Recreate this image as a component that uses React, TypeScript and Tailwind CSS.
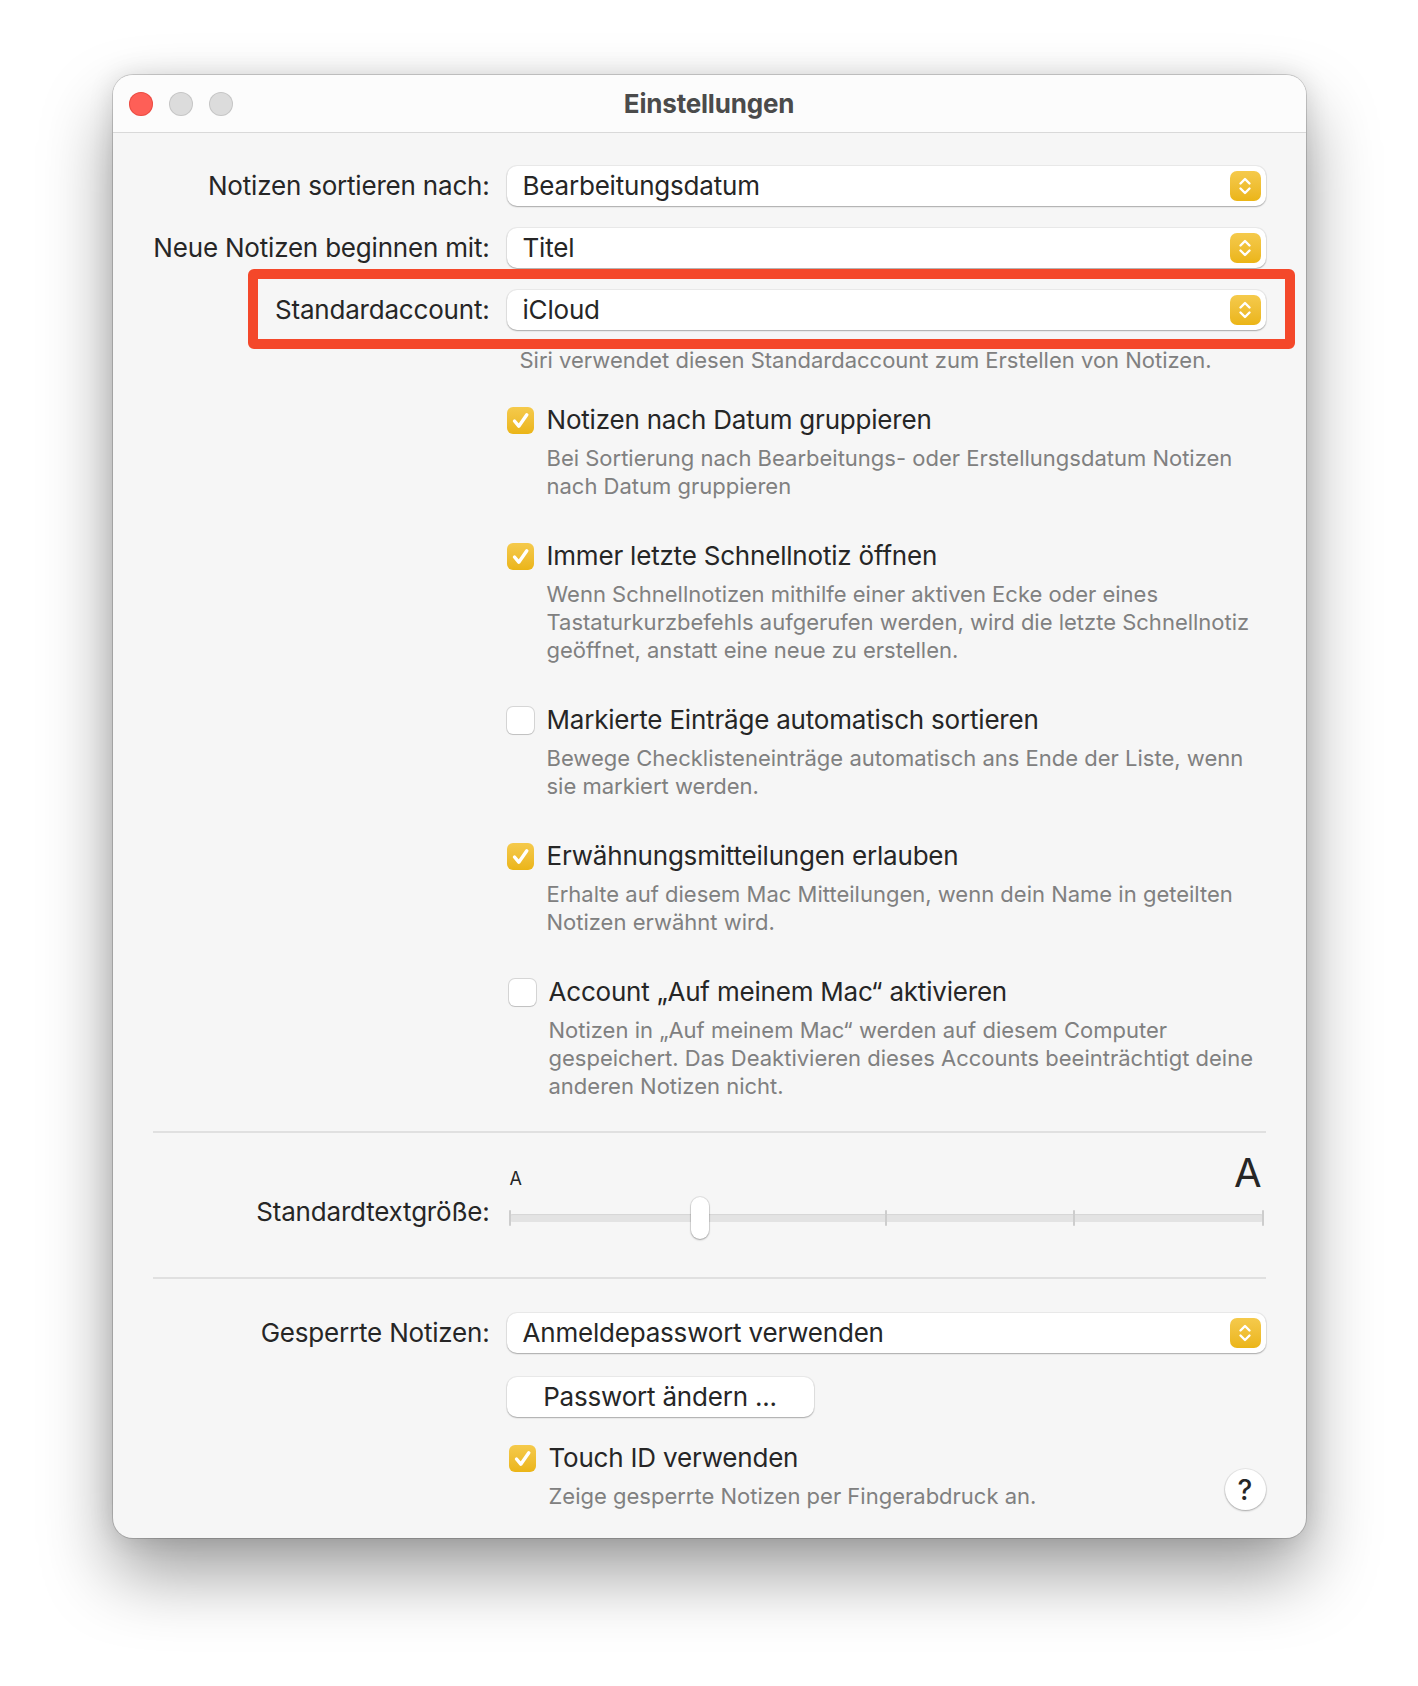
import { ReactNode } from "react";

const popupShadow =
  "shadow-[0_0_0_1px_rgba(0,0,0,0.05),0_1px_1.5px_rgba(0,0,0,0.28)]";

function Stepper() {
  return (
    <div className="w-[31px] h-[30px] rounded-[7px] bg-gradient-to-b from-[#f5ca4b] to-[#ebb515] flex items-center justify-center">
      <svg width="16" height="20" viewBox="0 0 16 20" fill="none">
        <path d="M3.5 7.5 L8 3 L12.5 7.5" stroke="white" strokeWidth="2.4" strokeLinecap="round" strokeLinejoin="round" />
        <path d="M3.5 12.5 L8 17 L12.5 12.5" stroke="white" strokeWidth="2.4" strokeLinecap="round" strokeLinejoin="round" />
      </svg>
    </div>
  );
}

function Popup({ value }: { value: string }) {
  return (
    <div className={`h-[40px] bg-white rounded-[10px] ${popupShadow} flex items-center justify-between pl-[16px] pr-[5px]`}>
      <span className="text-[26px] leading-[32px] tracking-[-0.2px] text-[#262626]">{value}</span>
      <Stepper />
    </div>
  );
}

function Checkbox({ checked }: { checked: boolean }) {
  if (checked) {
    return (
      <div className="w-[27px] h-[27px] rounded-[6px] bg-gradient-to-b from-[#f5ca4b] to-[#ebb515] flex items-center justify-center shrink-0">
        <svg width="27" height="27" viewBox="0 0 27 27" fill="none">
          <path d="M7.5 14 L11.8 19.2 L19.8 7.8" stroke="white" strokeWidth="3.4" strokeLinecap="round" strokeLinejoin="round" />
        </svg>
      </div>
    );
  }
  return (
    <div className="w-[27px] h-[27px] rounded-[6px] bg-white shrink-0 shadow-[0_0_0_1px_rgba(0,0,0,0.13),0_1px_1px_rgba(0,0,0,0.1)]" />
  );
}

function Option({ checked, title, lines, shift }: { checked: boolean; title: string; lines: string[]; shift?: boolean }) {
  return (
    <div className={shift ? "ml-[2px]" : ""}>
      <div className="flex items-center gap-[13px] h-[32px]">
        <Checkbox checked={checked} />
        <span className="text-[26px] leading-[32px] tracking-[-0.2px] text-[#262626] whitespace-nowrap">{title}</span>
      </div>
      <div className="pl-[40px] mt-[8px] text-[22px] leading-[28px] text-[#808080]">
        {lines.map((l) => (
          <div key={l} className="whitespace-nowrap">{l}</div>
        ))}
      </div>
    </div>
  );
}

function Row({ label, children, className = "" }: { label: string; children: ReactNode; className?: string }) {
  return (
    <div className={`grid grid-cols-[337px_1fr] gap-x-[17px] items-center relative ${className}`}>
      <div className="text-right text-[26px] leading-[32px] tracking-[-0.2px] text-[#262626] whitespace-nowrap">{label}</div>
      {children}
    </div>
  );
}

function TrafficLights() {
  return (
    <div className="flex gap-[16px] absolute left-[16px] top-[17px]">
      <div className="w-[24px] h-[24px] rounded-full bg-[#fe5f57] shadow-[inset_0_0_0_1px_rgba(200,40,30,0.35)]" />
      <div className="w-[24px] h-[24px] rounded-full bg-[#dcdcdc] shadow-[inset_0_0_0_1px_rgba(0,0,0,0.1)]" />
      <div className="w-[24px] h-[24px] rounded-full bg-[#dcdcdc] shadow-[inset_0_0_0_1px_rgba(0,0,0,0.1)]" />
    </div>
  );
}

function Slider() {
  const ticks = [0, 1, 2, 3, 4];
  return (
    <div className="flex flex-col">
      <div className="flex justify-between items-end h-[40px] pl-[3px] pr-[4px]">
        <span className="text-[18px] leading-[18px] text-[#262626] mb-[5px]">A</span>
        <span className="text-[40px] leading-[40px] text-[#262626]">A</span>
      </div>
      <div className="relative h-[42px] mt-[4px] mx-[2px]">
        <div className="absolute inset-x-0 top-[17px] h-[8px] rounded-full bg-[#e3e3e3] shadow-[inset_0_1px_1px_rgba(0,0,0,0.06)]" />
        <div className="absolute inset-x-0 top-[13px] h-[16px] flex justify-between">
          {ticks.map((t) => (
            <div key={t} className="w-[2px] h-[16px] rounded-full bg-[#cdcdcd]" />
          ))}
        </div>
        <div className="absolute top-0 left-[25.4%] -translate-x-1/2 w-[18px] h-[42px] rounded-full bg-white shadow-[0_0_0_1px_rgba(0,0,0,0.08),0_1px_2px_rgba(0,0,0,0.3)]" />
      </div>
    </div>
  );
}

export default function App() {
  return (
    <div className="min-h-screen bg-white flex justify-center pt-[75px] pb-[148px] [font-family:Inter,'Noto_Sans',sans-serif]">
      <div className="w-[1193px] rounded-[20px] bg-[#f6f6f6] overflow-hidden shadow-[0_0_0_1px_rgba(0,0,0,0.16),0_36px_70px_rgba(0,0,0,0.38),0_0_26px_rgba(0,0,0,0.12)]">
        <div className="relative h-[58px] bg-[#fcfcfc] border-b border-[#d9d9d9] flex items-center justify-center">
          <TrafficLights />
          <span className="text-[26px] font-bold tracking-[-0.2px] text-[#4b4b4b]">Einstellungen</span>
        </div>

        <div className="px-[40px] pt-[33px] pb-[28px]">
          <div className="flex flex-col gap-[22px]">
            <Row label="Notizen sortieren nach:">
              <Popup value="Bearbeitungsdatum" />
            </Row>
            <Row label="Neue Notizen beginnen mit:">
              <Popup value="Titel" />
            </Row>
            <Row label="Standardaccount:">
              <Popup value="iCloud" />
              <div className="absolute left-[95px] -right-[29px] -top-[21px] -bottom-[19px] border-[10px] border-[#f4482a] rounded-[6px] pointer-events-none" />
            </Row>
          </div>

          <div className="ml-[354px]">
            <div className="mt-[16px] pl-[13px] text-[22px] leading-[28px] text-[#808080] whitespace-nowrap">
              Siri verwendet diesen Standardaccount zum Erstellen von Notizen.
            </div>

            <div className="mt-[30px] flex flex-col gap-[40px]">
              <Option
                checked
                title="Notizen nach Datum gruppieren"
                lines={["Bei Sortierung nach Bearbeitungs- oder Erstellungsdatum Notizen", "nach Datum gruppieren"]}
              />
              <Option
                checked
                title="Immer letzte Schnellnotiz öffnen"
                lines={[
                  "Wenn Schnellnotizen mithilfe einer aktiven Ecke oder eines",
                  "Tastaturkurzbefehls aufgerufen werden, wird die letzte Schnellnotiz",
                  "geöffnet, anstatt eine neue zu erstellen.",
                ]}
              />
              <Option
                checked={false}
                title="Markierte Einträge automatisch sortieren"
                lines={["Bewege Checklisteneinträge automatisch ans Ende der Liste, wenn", "sie markiert werden."]}
              />
              <Option
                checked
                title="Erwähnungsmitteilungen erlauben"
                lines={["Erhalte auf diesem Mac Mitteilungen, wenn dein Name in geteilten", "Notizen erwähnt wird."]}
              />
              <Option
                checked={false}
                shift
                title="Account „Auf meinem Mac“ aktivieren"
                lines={[
                  "Notizen in „Auf meinem Mac“ werden auf diesem Computer",
                  "gespeichert. Das Deaktivieren dieses Accounts beeinträchtigt deine",
                  "anderen Notizen nicht.",
                ]}
              />
            </div>
          </div>

          <div className="mt-[31px] h-[2px] bg-[#e0e0e0]" />

          <div className="mt-[20px] grid grid-cols-[337px_1fr] gap-x-[17px]">
            <div className="flex items-end justify-end pb-[11px] text-[26px] leading-[32px] tracking-[-0.2px] text-[#262626] whitespace-nowrap">
              Standardtextgröße:
            </div>
            <Slider />
          </div>

          <div className="mt-[38px] h-[2px] bg-[#e0e0e0]" />

          <Row label="Gesperrte Notizen:" className="mt-[34px]">
            <Popup value="Anmeldepasswort verwenden" />
          </Row>

          <div className="ml-[354px]">
            <button className={`mt-[24px] w-[307px] h-[40px] bg-white rounded-[10px] ${popupShadow} text-[26px] leading-[32px] tracking-[-0.2px] text-[#262626] flex items-center justify-center`}>
              Passwort ändern ...
            </button>

            <div className="mt-[25px] flex items-end justify-between">
              <Option checked shift title="Touch ID verwenden" lines={["Zeige gesperrte Notizen per Fingerabdruck an."]} />
              <div className="w-[41px] h-[41px] rounded-full bg-white shadow-[0_0_0_1px_rgba(0,0,0,0.06),0_1px_2px_rgba(0,0,0,0.28)] flex items-center justify-center text-[28px] font-medium text-[#262626]">
                ?
              </div>
            </div>
          </div>
        </div>
      </div>
    </div>
  );
}
